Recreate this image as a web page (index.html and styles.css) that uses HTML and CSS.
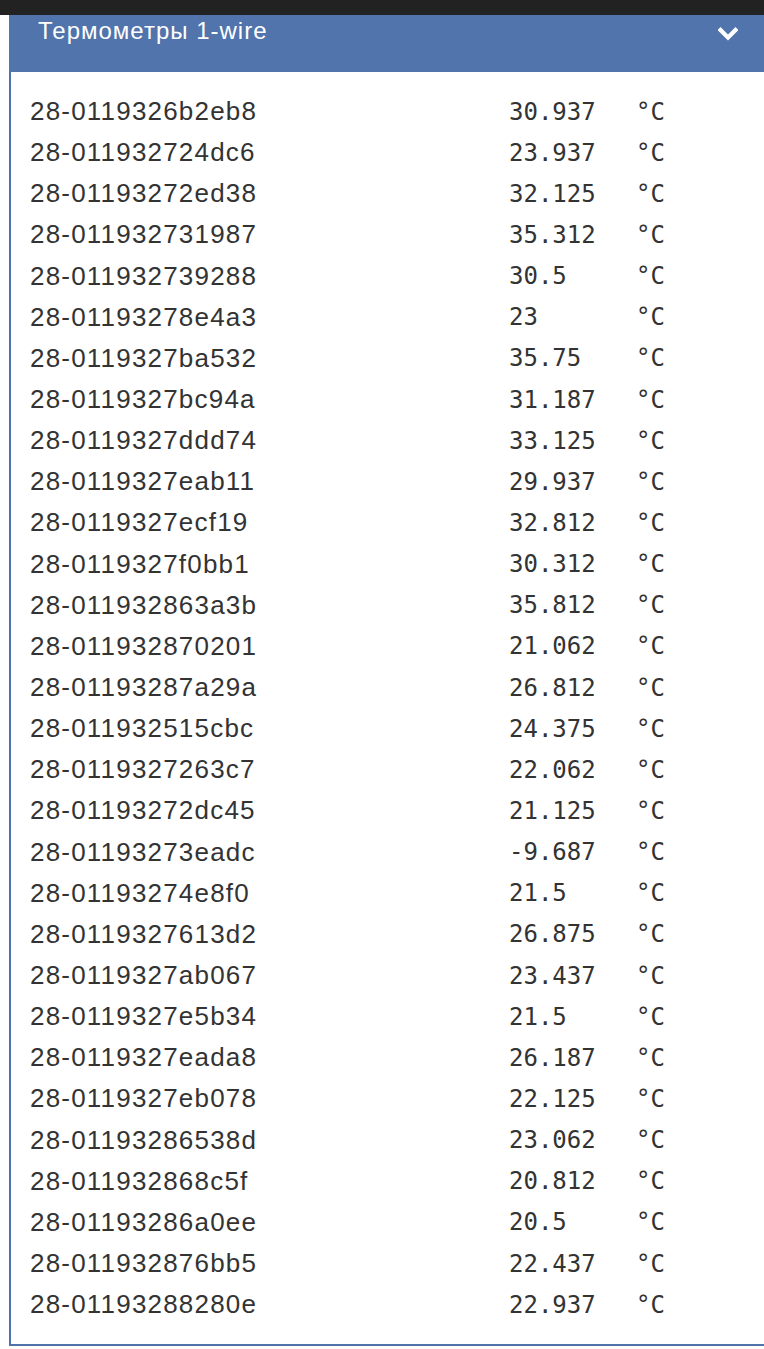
FILE: index.html
```html
<!DOCTYPE html>
<html lang="ru">
<head>
<meta charset="utf-8">
<title>Термометры 1-wire</title>
<link rel="stylesheet" href="styles.css">
</head>
<body>
<div class="topbar"></div>
<section class="panel">
  <header class="panel-head">
    <span class="panel-title">Термометры 1-wire</span>
    <svg class="chevron" width="20" height="14" viewBox="0 0 20 14"><polyline points="2.5,3 10,10.5 17.5,3" fill="none" stroke="#fff" stroke-width="4.2" stroke-linecap="square"/></svg>
  </header>
  <div class="panel-body">
    <div class="row"><span class="id">28-0119326b2eb8</span><span class="val">30.937</span><span class="unit">°C</span></div>
    <div class="row"><span class="id">28-011932724dc6</span><span class="val">23.937</span><span class="unit">°C</span></div>
    <div class="row"><span class="id">28-01193272ed38</span><span class="val">32.125</span><span class="unit">°C</span></div>
    <div class="row"><span class="id">28-011932731987</span><span class="val">35.312</span><span class="unit">°C</span></div>
    <div class="row"><span class="id">28-011932739288</span><span class="val">30.5</span><span class="unit">°C</span></div>
    <div class="row"><span class="id">28-01193278e4a3</span><span class="val">23</span><span class="unit">°C</span></div>
    <div class="row"><span class="id">28-0119327ba532</span><span class="val">35.75</span><span class="unit">°C</span></div>
    <div class="row"><span class="id">28-0119327bc94a</span><span class="val">31.187</span><span class="unit">°C</span></div>
    <div class="row"><span class="id">28-0119327ddd74</span><span class="val">33.125</span><span class="unit">°C</span></div>
    <div class="row"><span class="id">28-0119327eab11</span><span class="val">29.937</span><span class="unit">°C</span></div>
    <div class="row"><span class="id">28-0119327ecf19</span><span class="val">32.812</span><span class="unit">°C</span></div>
    <div class="row"><span class="id">28-0119327f0bb1</span><span class="val">30.312</span><span class="unit">°C</span></div>
    <div class="row"><span class="id">28-011932863a3b</span><span class="val">35.812</span><span class="unit">°C</span></div>
    <div class="row"><span class="id">28-011932870201</span><span class="val">21.062</span><span class="unit">°C</span></div>
    <div class="row"><span class="id">28-01193287a29a</span><span class="val">26.812</span><span class="unit">°C</span></div>
    <div class="row"><span class="id">28-011932515cbc</span><span class="val">24.375</span><span class="unit">°C</span></div>
    <div class="row"><span class="id">28-0119327263c7</span><span class="val">22.062</span><span class="unit">°C</span></div>
    <div class="row"><span class="id">28-01193272dc45</span><span class="val">21.125</span><span class="unit">°C</span></div>
    <div class="row"><span class="id">28-01193273eadc</span><span class="val">-9.687</span><span class="unit">°C</span></div>
    <div class="row"><span class="id">28-01193274e8f0</span><span class="val">21.5</span><span class="unit">°C</span></div>
    <div class="row"><span class="id">28-0119327613d2</span><span class="val">26.875</span><span class="unit">°C</span></div>
    <div class="row"><span class="id">28-0119327ab067</span><span class="val">23.437</span><span class="unit">°C</span></div>
    <div class="row"><span class="id">28-0119327e5b34</span><span class="val">21.5</span><span class="unit">°C</span></div>
    <div class="row"><span class="id">28-0119327eada8</span><span class="val">26.187</span><span class="unit">°C</span></div>
    <div class="row"><span class="id">28-0119327eb078</span><span class="val">22.125</span><span class="unit">°C</span></div>
    <div class="row"><span class="id">28-01193286538d</span><span class="val">23.062</span><span class="unit">°C</span></div>
    <div class="row"><span class="id">28-011932868c5f</span><span class="val">20.812</span><span class="unit">°C</span></div>
    <div class="row"><span class="id">28-01193286a0ee</span><span class="val">20.5</span><span class="unit">°C</span></div>
    <div class="row"><span class="id">28-011932876bb5</span><span class="val">22.437</span><span class="unit">°C</span></div>
    <div class="row"><span class="id">28-01193288280e</span><span class="val">22.937</span><span class="unit">°C</span></div>
  </div>
</section>
</body>
</html>
```
FILE: styles.css
```css
html, body {
  margin: 0;
  padding: 0;
  overflow: hidden;
  background: #fff;
}
body {
  width: 764px;
  height: 1349px;
  font-family: "Liberation Sans", Arial, sans-serif;
  color: #333;
}
.topbar {
  height: 15px;
  background: #222;
}
.panel {
  margin-left: 9px;
  width: 755px;
  border: 2px solid #4f73aa;
  border-top: 0;
  border-right: 0;
  box-sizing: border-box;
}
.panel-head {
  height: 57px;
  background: #5074ab;
  display: flex;
  align-items: flex-start;
  padding: 0 0 0 29px;
  margin-left: -2px;
  position: relative;
}
.panel-title {
  color: #fff;
  font-size: 24px;
  line-height: 32px;
  margin-top: 0;
  letter-spacing: 1px;
}
.chevron {
  position: absolute;
  left: 709px;
  top: 12px;
}
.panel-body {
  padding: 19px 0 19px 19px;
}
.row {
  display: grid;
  grid-template-columns: 479px 127px auto;
  height: 41.15px;
  align-items: center;
}
.id {
  font-size: 26px;
  letter-spacing: 1.2px;
}
.val, .unit {
  font-family: "DejaVu Sans Mono", "Liberation Mono", monospace;
  font-size: 24px;
}
```
